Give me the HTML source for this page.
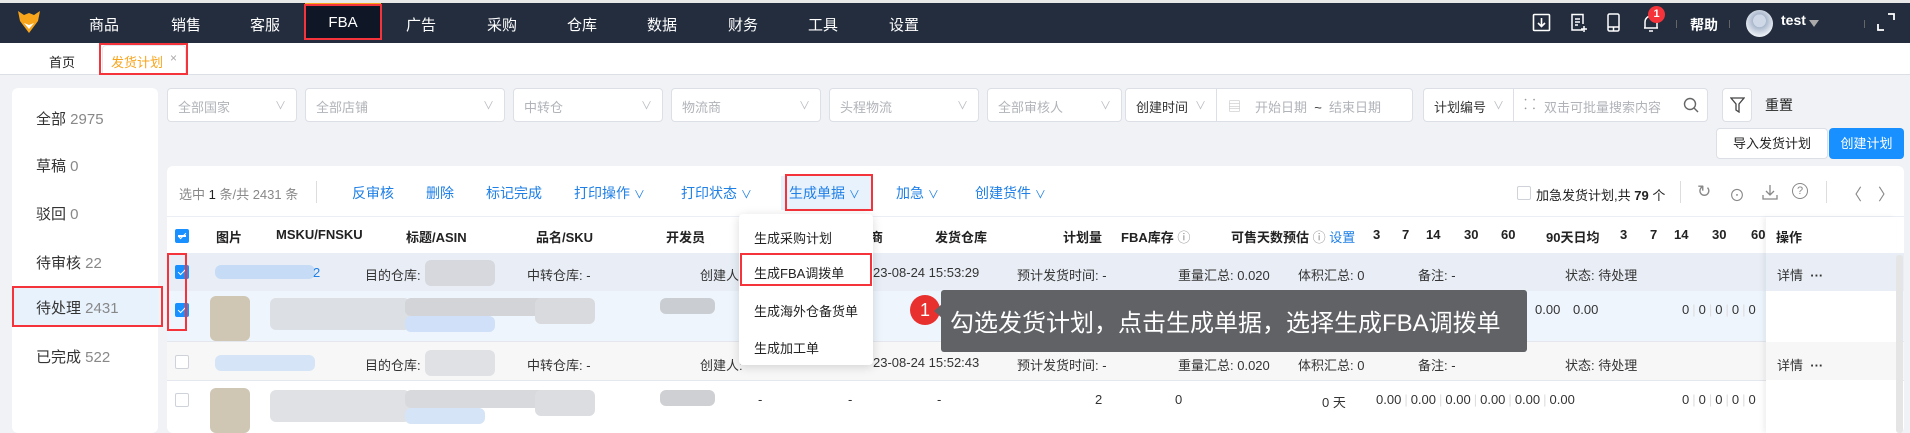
<!DOCTYPE html>
<html><head><meta charset="utf-8"><style>
*{box-sizing:border-box;margin:0;padding:0}
body{width:1910px;height:433px;overflow:hidden;background:#f0f2f5;font-family:"Liberation Sans","Noto Sans CJK SC",sans-serif;font-size:13px;color:#333;position:relative}
.a{position:absolute;white-space:nowrap}
.nav{position:absolute;left:0;top:3px;width:1910px;height:40px;background:#232d3e}
.ni{position:absolute;top:14px;color:#fff;font-size:15px;transform:translateX(-50%)}
.rb{position:absolute;border:2px solid #f5333a}
.fb{position:absolute;top:88px;height:34px;background:#fff;border:1px solid #dcdfe6;border-radius:4px;color:#b0b3b8;font-size:13px;padding:8px 10px}
.fb i{position:absolute;right:10px;top:8px;font-style:normal;color:#b8bbc0;font-size:11px}
.cb{position:absolute;width:14px;height:14px;border:1px solid #cfd3d9;border-radius:2px;background:#fff}
.cb.on{background:#1890ff;border-color:#1890ff}
.cb.on:after{content:"";position:absolute;left:4px;top:1px;width:3px;height:7px;border:solid #fff;border-width:0 1.5px 1.5px 0;transform:rotate(45deg)}
.bl{color:#1e7fe6}
.g{color:#999}
.blur{position:absolute;border-radius:6px}
.th{position:absolute;top:227px;font-weight:bold;font-size:13px;color:#222}
.t{position:absolute;font-size:13px;color:#333}
.s{color:#ddd;margin:0 3px}
</style></head><body>
<div class="a" style="left:0;top:0;width:1910px;height:3px;background:#e8e8e8"></div>
<div class="nav"></div>
<svg class="a" style="left:17px;top:10px" width="24" height="24" viewBox="0 0 24 24"><path d="M1 1 L7 5 L12 3 L17 5 L23 1 L21 11 L12 23 L3 11 Z" fill="#f8a51c"/><path d="M7 13 L12 19 L17 13 L12 15 Z" fill="#fff"/></svg>
<div class="a" style="left:305px;top:3px;width:76px;height:37px;background:#0f1626;border-top:2px solid #f8a51c"></div>
<div class="rb" style="left:304px;top:4px;width:78px;height:36px"></div>
<div class="ni" style="left:104px">商品</div><div class="ni" style="left:186px">销售</div><div class="ni" style="left:265px">客服</div>
<div class="ni" style="left:343px">FBA</div><div class="ni" style="left:421px">广告</div><div class="ni" style="left:502px">采购</div>
<div class="ni" style="left:582px">仓库</div><div class="ni" style="left:662px">数据</div><div class="ni" style="left:743px">财务</div>
<div class="ni" style="left:823px">工具</div><div class="ni" style="left:904px">设置</div>
<svg class="a" style="left:1532px;top:13px" width="20" height="20" viewBox="0 0 20 20" fill="none" stroke="#fff" stroke-width="1.6"><rect x="1.5" y="1.5" width="16" height="16" rx="1"/><path d="M9.5 5v8M6 10l3.5 3.5L13 10"/></svg>
<svg class="a" style="left:1570px;top:13px" width="20" height="20" viewBox="0 0 20 20" fill="none" stroke="#fff" stroke-width="1.5"><path d="M13 17H2V1.5h11V11"/><path d="M5 6h5M5 9h5M5 12h3M14 13v6M11 16h6"/></svg>
<svg class="a" style="left:1606px;top:13px" width="16" height="20" viewBox="0 0 16 20" fill="none" stroke="#fff" stroke-width="1.5"><rect x="2" y="1" width="11" height="17" rx="1.5"/><path d="M2 14h11M7.5 14v4"/></svg>
<svg class="a" style="left:1642px;top:13px" width="18" height="20" viewBox="0 0 18 20" fill="none" stroke="#fff" stroke-width="1.5"><path d="M3 15V9a6 6 0 0 1 12 0v6H2h14M7 18h4"/></svg>
<div class="a" style="left:1648px;top:6px;width:17px;height:17px;border-radius:50%;background:#f5333a;color:#fff;font-size:11px;font-weight:bold;text-align:center;line-height:17px">1</div>
<div class="a" style="left:1676px;top:20px;width:1px;height:8px;background:#666"></div>
<div class="a" style="left:1690px;top:15px;color:#fff;font-size:14px;font-weight:bold">帮助</div>
<div class="a" style="left:1729px;top:20px;width:1px;height:8px;background:#666"></div>
<div class="a" style="left:1746px;top:10px;width:27px;height:27px;border-radius:50%;background:radial-gradient(circle at 50% 40%,#cfd8e6 30%,#a9b7cc 31%,#e8edf3 70%)"></div>
<div class="a" style="left:1781px;top:12px;color:#fff;font-size:14px;font-weight:bold">test</div>
<div class="a" style="left:1809px;top:20px;border:5px solid transparent;border-top:7px solid #aaa"></div>
<div class="a" style="left:1864px;top:20px;width:1px;height:8px;background:#666"></div>
<svg class="a" style="left:1877px;top:13px" width="18" height="18" viewBox="0 0 18 18" fill="none" stroke="#fff" stroke-width="1.8"><path d="M11 1h6v6M1 11v6h6"/></svg>

<div class="a" style="left:0;top:43px;width:1910px;height:32px;background:#fff;border-bottom:1px solid #dcdfe6"></div>
<div class="a" style="left:49px;top:52px;font-size:13px;color:#222">首页</div>
<div class="a" style="left:102px;top:45px;width:84px;height:29px;border:1px solid #e4e7ed;border-bottom:none;border-radius:4px 4px 0 0"></div>
<div class="a" style="left:111px;top:52px;font-size:13px;color:#f8a51c">发货计划</div>
<div class="a" style="left:170px;top:51px;font-size:12px;color:#aaa">×</div>
<div class="rb" style="left:99px;top:43px;width:89px;height:32px"></div>

<div class="a" style="left:12px;top:88px;width:146px;height:345px;background:#fff;border-radius:6px"></div>
<div class="a" style="left:12px;top:287px;width:146px;height:40px;background:#e8f2fd"></div>
<div class="a" style="left:12px;top:287px;width:2px;height:40px;background:#1890ff"></div>
<div class="a" style="left:36px;top:108px;font-size:15px;color:#333">全部 <span style="color:#888">2975</span></div>
<div class="a" style="left:36px;top:155px;font-size:15px;color:#333">草稿 <span style="color:#888">0</span></div>
<div class="a" style="left:36px;top:203px;font-size:15px;color:#333">驳回 <span style="color:#888">0</span></div>
<div class="a" style="left:36px;top:252px;font-size:15px;color:#333">待审核 <span style="color:#888">22</span></div>
<div class="a" style="left:36px;top:297px;font-size:15px;color:#333">待处理 <span style="color:#888">2431</span></div>
<div class="a" style="left:36px;top:346px;font-size:15px;color:#333">已完成 <span style="color:#888">522</span></div>
<div class="rb" style="left:12px;top:286px;width:151px;height:41px"></div>

<div class="fb" style="left:167px;width:130px">全部国家<i>∨</i></div>
<div class="fb" style="left:305px;width:200px">全部店铺<i>∨</i></div>
<div class="fb" style="left:513px;width:150px">中转仓<i>∨</i></div>
<div class="fb" style="left:671px;width:150px">物流商<i>∨</i></div>
<div class="fb" style="left:829px;width:150px">头程物流<i>∨</i></div>
<div class="fb" style="left:987px;width:135px">全部审核人<i>∨</i></div>
<div class="fb" style="left:1125px;width:288px;color:#333">创建时间<span style="position:absolute;left:90px;top:-1px;height:34px;border-left:1px solid #dcdfe6"></span><span style="position:absolute;left:69px;top:8px;color:#b8bbc0;font-size:11px">∨</span><span style="position:absolute;left:102px;top:7px;color:#bbb">▤</span><span style="position:absolute;left:129px;top:8px;color:#b0b3b8">开始日期&nbsp;&nbsp;<span style="color:#333">~</span>&nbsp;&nbsp;结束日期</span></div>
<div class="fb" style="left:1423px;width:285px;color:#333">计划编号<span style="position:absolute;left:89px;top:-1px;height:34px;border-left:1px solid #dcdfe6"></span><span style="position:absolute;left:69px;top:8px;color:#b8bbc0;font-size:11px">∨</span><span style="position:absolute;left:100px;top:6px;color:#999;font-size:14px">⸬</span><span style="position:absolute;left:120px;top:8px;color:#b0b3b8">双击可批量搜索内容</span><svg style="position:absolute;right:8px;top:8px" width="16" height="16" viewBox="0 0 16 16" fill="none" stroke="#666" stroke-width="1.4"><circle cx="7" cy="7" r="5.5"/><path d="M11 11l4 4"/></svg></div>
<div class="a" style="left:1722px;top:88px;width:30px;height:34px;background:#fff;border:1px solid #dcdfe6;border-radius:4px"><svg style="position:absolute;left:7px;top:8px" width="15" height="16" viewBox="0 0 15 16" fill="none" stroke="#444" stroke-width="1.3"><path d="M1 1h13L9 7v8L6 13V7z"/></svg></div>
<div class="a" style="left:1765px;top:95px;font-size:14px;color:#222">重置</div>
<div class="a" style="left:1716px;top:128px;width:112px;height:31px;background:#fff;border:1px solid #dcdfe6;border-radius:4px;font-size:13px;color:#222;text-align:center;line-height:29px">导入发货计划</div>
<div class="a" style="left:1829px;top:128px;width:75px;height:31px;background:#1890ff;border-radius:4px;font-size:13px;color:#fff;text-align:center;line-height:31px">创建计划</div>

<div class="a" style="left:167px;top:166px;width:1737px;height:267px;background:#fff;border-radius:6px"></div>
<div class="a" style="left:179px;top:184px;font-size:13px;color:#888">选中 <span style="color:#222">1</span> 条/共 2431 条</div>
<div class="a" style="left:316px;top:181px;width:1px;height:22px;background:#ddd"></div>
<div class="a bl" style="left:352px;top:183px;font-size:14px">反审核</div>
<div class="a bl" style="left:426px;top:183px;font-size:14px">删除</div>
<div class="a bl" style="left:486px;top:183px;font-size:14px">标记完成</div>
<div class="a bl" style="left:574px;top:183px;font-size:14px">打印操作 <span style="font-size:11px">∨</span></div>
<div class="a bl" style="left:681px;top:183px;font-size:14px">打印状态 <span style="font-size:11px">∨</span></div>
<div class="a" style="left:781px;top:176px;width:92px;height:34px;background:#e8f2fd"></div>
<div class="a bl" style="left:789px;top:183px;font-size:14px">生成单据 <span style="font-size:11px">∨</span></div>
<div class="rb" style="left:785px;top:174px;width:88px;height:37px"></div>
<div class="a bl" style="left:896px;top:183px;font-size:14px">加急 <span style="font-size:11px">∨</span></div>
<div class="a bl" style="left:975px;top:183px;font-size:14px">创建货件 <span style="font-size:11px">∨</span></div>
<div class="cb" style="left:1517px;top:186px"></div>
<div class="a" style="left:1536px;top:185px;font-size:13px;color:#222">加急发货计划,共 <b>79</b> 个</div>
<div class="a" style="left:1680px;top:181px;width:1px;height:22px;background:#ddd"></div>
<div class="a" style="left:1697px;top:182px;font-size:17px;color:#888">↻</div>
<div class="a" style="left:1729px;top:182px;font-size:16px;color:#888">⊙</div>
<svg class="a" style="left:1762px;top:184px" width="16" height="16" viewBox="0 0 16 16" fill="none" stroke="#888" stroke-width="1.3"><path d="M8 1v10M4 7l4 4 4-4M1 11v4h14v-4"/></svg>
<div class="a" style="left:1792px;top:183px;width:16px;height:16px;border:1.3px solid #888;border-radius:50%;font-size:11px;text-align:center;line-height:14px;color:#888">?</div>
<div class="a" style="left:1826px;top:181px;width:1px;height:22px;background:#ddd"></div>
<div class="a" style="left:1846px;top:181px;font-size:16px;color:#888">〈</div>
<div class="a" style="left:1878px;top:181px;font-size:16px;color:#888">〉</div>

<div class="a" style="left:167px;top:216px;width:1737px;height:1px;background:#ebeef5"></div>
<div class="cb on" style="left:175px;top:229px"></div><div class="a" style="left:178px;top:235px;width:8px;height:2px;background:#fff"></div>
<div class="th" style="left:216px">图片</div><div class="th" style="left:276px">MSKU/FNSKU</div><div class="th" style="left:406px">标题/ASIN</div>
<div class="th" style="left:536px">品名/SKU</div><div class="th" style="left:666px">开发员</div><div class="th" style="left:870px">商</div>
<div class="th" style="left:935px">发货仓库</div><div class="th" style="left:1063px">计划量</div><div class="th" style="left:1121px">FBA库存 <span style="font-weight:normal;color:#888">ⓘ</span></div>
<div class="th" style="left:1231px">可售天数预估 <span style="font-weight:normal;color:#888">ⓘ</span> <span class="bl" style="font-weight:normal">设置</span></div>
<div class="th" style="left:1373px">3</div><div class="th" style="left:1402px">7</div><div class="th" style="left:1426px">14</div><div class="th" style="left:1464px">30</div><div class="th" style="left:1501px">60</div><div class="th" style="left:1546px">90天日均</div>
<div class="th" style="left:1620px">3</div><div class="th" style="left:1650px">7</div><div class="th" style="left:1674px">14</div><div class="th" style="left:1712px">30</div><div class="th" style="left:1751px">60</div>

<div class="a" style="left:167px;top:253px;width:1737px;height:38px;background:#e9eef6"></div>
<div class="a" style="left:167px;top:291px;width:1737px;height:50px;background:#eef5fd"></div>
<div class="a" style="left:167px;top:341px;width:1737px;height:1px;background:#e4e7ed"></div>
<div class="a" style="left:167px;top:342px;width:1737px;height:38px;background:#f7f7f7"></div>
<div class="a" style="left:167px;top:380px;width:1737px;height:1px;background:#e4e7ed"></div>

<div class="cb on" style="left:175px;top:265px"></div>
<div class="cb on" style="left:175px;top:303px"></div>
<div class="cb" style="left:175px;top:355px"></div>
<div class="cb" style="left:175px;top:393px"></div>
<div class="rb" style="left:167px;top:253px;width:20px;height:78px"></div>

<div class="blur" style="left:215px;top:265px;width:100px;height:14px;background:#c6dcf6"></div><div class="a bl" style="left:313px;top:265px">2</div>
<div class="t g" style="left:365px;top:265px">目的仓库:</div><div class="blur" style="left:425px;top:260px;width:70px;height:26px;background:#d6d8de"></div>
<div class="t g" style="left:527px;top:265px">中转仓库: <span style="color:#333">-</span></div>
<div class="t g" style="left:700px;top:265px">创建人:</div>
<div class="t" style="left:873px;top:265px">23-08-24 15:53:29</div>
<div class="t g" style="left:1017px;top:265px">预计发货时间: <span style="color:#333">-</span></div>
<div class="t g" style="left:1178px;top:265px">重量汇总: <span style="color:#333">0.020</span></div>
<div class="t g" style="left:1298px;top:265px">体积汇总: <span style="color:#333">0</span></div>
<div class="t g" style="left:1418px;top:265px">备注: <span style="color:#333">-</span></div>
<div class="t g" style="left:1565px;top:265px">状态: <span style="color:#333">待处理</span></div>

<div class="blur" style="left:210px;top:296px;width:40px;height:45px;background:#cfc6b4"></div>
<div class="blur" style="left:270px;top:298px;width:140px;height:32px;background:#dcdfe4"></div>
<div class="blur" style="left:405px;top:298px;width:140px;height:18px;background:#d2d4d8"></div><div class="blur" style="left:405px;top:316px;width:90px;height:16px;background:#cfe0f8"></div>
<div class="blur" style="left:535px;top:298px;width:60px;height:26px;background:#d8dade"></div>
<div class="blur" style="left:660px;top:298px;width:55px;height:16px;background:#cacdd2"></div>
<div class="t" style="left:1535px;top:302px">0.00</div><div class="t" style="left:1573px;top:302px">0.00</div>
<div class="t" style="left:1682px;top:302px">0<span class="s">|</span>0<span class="s">|</span>0<span class="s">|</span>0<span class="s">|</span>0</div>

<div class="blur" style="left:215px;top:355px;width:100px;height:16px;background:#d5e4f7"></div>
<div class="t g" style="left:365px;top:355px">目的仓库:</div><div class="blur" style="left:425px;top:350px;width:70px;height:26px;background:#e0e1e4"></div>
<div class="t g" style="left:527px;top:355px">中转仓库: <span style="color:#333">-</span></div>
<div class="t g" style="left:700px;top:355px">创建人:</div>
<div class="t" style="left:873px;top:355px">23-08-24 15:52:43</div>
<div class="t g" style="left:1017px;top:355px">预计发货时间: <span style="color:#333">-</span></div>
<div class="t g" style="left:1178px;top:355px">重量汇总: <span style="color:#333">0.020</span></div>
<div class="t g" style="left:1298px;top:355px">体积汇总: <span style="color:#333">0</span></div>
<div class="t g" style="left:1418px;top:355px">备注: <span style="color:#333">-</span></div>
<div class="t g" style="left:1565px;top:355px">状态: <span style="color:#333">待处理</span></div>

<div class="blur" style="left:210px;top:388px;width:40px;height:45px;background:#cfc6b4"></div>
<div class="blur" style="left:270px;top:390px;width:140px;height:32px;background:#e0e1e4"></div>
<div class="blur" style="left:405px;top:390px;width:140px;height:18px;background:#d8d9dc"></div><div class="blur" style="left:405px;top:408px;width:80px;height:16px;background:#d6e4f7"></div>
<div class="blur" style="left:535px;top:390px;width:60px;height:26px;background:#dcdde0"></div>
<div class="blur" style="left:660px;top:390px;width:55px;height:16px;background:#cfd0d3"></div>
<div class="t" style="left:758px;top:392px">-</div><div class="t" style="left:848px;top:392px">-</div><div class="t" style="left:937px;top:392px">-</div>
<div class="t" style="left:1095px;top:392px">2</div><div class="t" style="left:1175px;top:392px">0</div><div class="t" style="left:1322px;top:392px">0 天</div>
<div class="t" style="left:1376px;top:392px">0.00<span class="s">|</span>0.00<span class="s">|</span>0.00<span class="s">|</span>0.00<span class="s">|</span>0.00<span class="s">|</span>0.00</div>
<div class="t" style="left:1682px;top:392px">0<span class="s">|</span>0<span class="s">|</span>0<span class="s">|</span>0<span class="s">|</span>0</div>

<div class="a" style="left:1766px;top:217px;width:130px;height:216px;background:#fff;box-shadow:-3px 0 5px rgba(0,0,0,.06)"></div>
<div class="a" style="left:1766px;top:253px;width:130px;height:38px;background:#e9eef6"></div>
<div class="a" style="left:1766px;top:342px;width:130px;height:38px;background:#f7f7f7"></div>
<div class="th" style="left:1776px">操作</div>
<div class="t bl" style="left:1777px;top:265px">详情 &nbsp;<b>···</b></div>
<div class="t bl" style="left:1777px;top:355px">详情 &nbsp;<b>···</b></div>
<div class="a" style="left:1896px;top:255px;width:7px;height:178px;background:#e5e5e5;border-radius:3px"></div>

<div class="a" style="left:739px;top:214px;width:134px;height:151px;background:#fff;border-radius:4px;box-shadow:0 2px 10px rgba(0,0,0,.15)"></div>
<div class="a" style="left:754px;top:228px;font-size:13px;color:#222">生成采购计划</div>
<div class="a" style="left:754px;top:263px;font-size:13px;color:#222">生成FBA调拨单</div>
<div class="rb" style="left:740px;top:253px;width:132px;height:33px"></div>
<div class="a" style="left:754px;top:301px;font-size:13px;color:#222">生成海外仓备货单</div>
<div class="a" style="left:754px;top:338px;font-size:13px;color:#222">生成加工单</div>

<div class="a" style="left:910px;top:295px;width:30px;height:30px;border-radius:50%;background:#e8312f;color:#fff;font-size:18px;text-align:center;line-height:30px">1</div>
<div class="a" style="left:934px;top:304px;border:7px solid transparent;border-right:8px solid #606266;border-left:0"></div>
<div class="a" style="left:941px;top:290px;width:586px;height:62px;background:#606266;border-radius:3px"></div>
<div class="a" style="left:950px;top:303px;font-size:24px;color:#fff">勾选发货计划，点击生成单据，选择生成FBA调拨单</div>
</body></html>
